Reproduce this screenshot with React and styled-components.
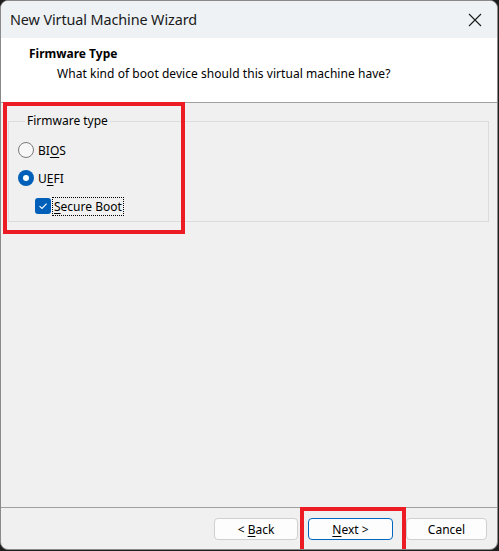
import React from "react";
import styled, { createGlobalStyle } from "styled-components";

const Global = createGlobalStyle`
  html, body { margin: 0; padding: 0; background: #1e1e1e; }
  body { font-family: "Noto Sans", "Open Sans", sans-serif; }
  * { box-sizing: border-box; }
`;

const Window = styled.div`
  position: relative;
  width: 498px;
  height: 550px;
  border: 1px solid #8a8a8a;
  border-radius: 8px;
  overflow: hidden;
  background: #f0f0f0;
  display: flex;
  flex-direction: column;
  font-size: 12px;
  color: #000;
`;

const TitleBar = styled.div`
  height: 37px;
  flex: none;
  background: #eef2f5;
  display: flex;
  align-items: center;
  justify-content: space-between;
  padding: 0 14px 0 9px;
`;

const Title = styled.span`
  font-size: 14.4px;
  letter-spacing: -0.1px;
  color: #1a1a1a;
`;

const CloseButton = styled.div`
  width: 16px;
  height: 16px;
  display: flex;
  align-items: center;
  justify-content: center;
`;

const Header = styled.div`
  height: 65px;
  flex: none;
  background: #fff;
  border-bottom: 1px solid #a0a0a0;
  padding: 8px 0 0 28px;
`;

const HeaderTitle = styled.div`
  font-weight: 700;
  font-size: 12px;
  line-height: 16px;
`;

const HeaderSub = styled.div`
  margin: 4px 0 0 28px;
  font-size: 12px;
  line-height: 16px;
  letter-spacing: 0.05px;
`;

const Content = styled.div`
  flex: 1;
  padding: 10px 8px 0 7px;
`;

const Group = styled.fieldset`
  margin: 0;
  height: 109px;
  border: 1px solid #dcdcdc;
  padding: 7px 0 0 9px;
  display: flex;
  flex-direction: column;
`;

const Legend = styled.legend`
  padding: 0 2px;
  margin-left: 7px;
  font-size: 12px;
  line-height: 16px;
`;

const Option = styled.label`
  display: flex;
  align-items: center;
  height: 28px;
  flex: none;
  gap: ${(p) => p.$gap || 4}px;
  padding-left: ${(p) => p.$indent || 0}px;
`;

const RadioMark = styled.span`
  width: 16px;
  height: 16px;
  border-radius: 50%;
  flex: none;
  border: ${(p) => (p.$checked ? "none" : "1px solid #7a7a7a")};
  background: ${(p) => (p.$checked ? "#005fb8" : "#f7f7f7")};
  display: flex;
  align-items: center;
  justify-content: center;
  &::after {
    content: "";
    display: ${(p) => (p.$checked ? "block" : "none")};
    width: 6px;
    height: 6px;
    border-radius: 50%;
    background: #fff;
  }
`;

const CheckMark = styled.span`
  width: 16px;
  height: 16px;
  flex: none;
  border-radius: 3px;
  background: #005fb8;
  display: flex;
  align-items: center;
  justify-content: center;
`;

const FocusText = styled.span`
  outline: 1px dotted #000;
  outline-offset: 0;
  padding: 0 1px;
  line-height: 17px;
`;

const U = styled.span`
  text-decoration: underline;
  text-underline-offset: 2px;
`;

const Footer = styled.div`
  height: 42px;
  flex: none;
  border-top: 1px solid #a0a0a0;
  display: flex;
  justify-content: flex-end;
  align-items: flex-start;
  padding: 10px 10px 0 0;
`;

const Button = styled.button`
  width: ${(p) => p.$w}px;
  height: 22px;
  margin-left: ${(p) => p.$ml || 0}px;
  background: #fdfdfd;
  border: 1px solid ${(p) => (p.$focus ? "#0067c0" : "#d0d0d0")};
  border-radius: 4px;
  font-family: inherit;
  font-size: 12px;
  color: #000;
  padding: 0;
`;

const Highlight = styled.div`
  position: absolute;
  left: ${(p) => p.$x}px;
  top: ${(p) => p.$y}px;
  width: ${(p) => p.$w}px;
  height: ${(p) => p.$h}px;
  border: 4px solid #ed1c24;
  pointer-events: none;
`;

export default function App() {
  return (
    <>
      <Global />
      <Window>
        <TitleBar>
          <Title>New Virtual Machine Wizard</Title>
          <CloseButton>
            <svg width="14" height="14" viewBox="0 0 14 14">
              <path d="M1 1 L13 13 M13 1 L1 13" stroke="#1a1a1a" strokeWidth="1.1" />
            </svg>
          </CloseButton>
        </TitleBar>
        <Header>
          <HeaderTitle>Firmware Type</HeaderTitle>
          <HeaderSub>What kind of boot device should this virtual machine have?</HeaderSub>
        </Header>
        <Content>
          <Group>
            <Legend>Firmware type</Legend>
            <Option>
              <RadioMark />
              <span>
                BI<U>O</U>S
              </span>
            </Option>
            <Option>
              <RadioMark $checked />
              <span>
                U<U>E</U>FI
              </span>
            </Option>
            <Option $indent={17} $gap={2}>
              <CheckMark>
                <svg width="10" height="10" viewBox="0 0 10 10">
                  <path d="M1.5 5.2 L4 7.5 L8.6 2.6" fill="none" stroke="#fff" strokeWidth="1.1" />
                </svg>
              </CheckMark>
              <FocusText>
                <U>S</U>ecure Boot
              </FocusText>
            </Option>
          </Group>
        </Content>
        <Footer>
          <Button $w={84}>
            &lt; <U>B</U>ack
          </Button>
          <Button $w={85} $ml={10} $focus>
            <U>N</U>ext &gt;
          </Button>
          <Button $w={81} $ml={13}>
            Cancel
          </Button>
        </Footer>
        <Highlight $x={2} $y={101} $w={182} $h={132} />
        <Highlight $x={299} $y={506} $w={106} $h={50} />
      </Window>
    </>
  );
}
